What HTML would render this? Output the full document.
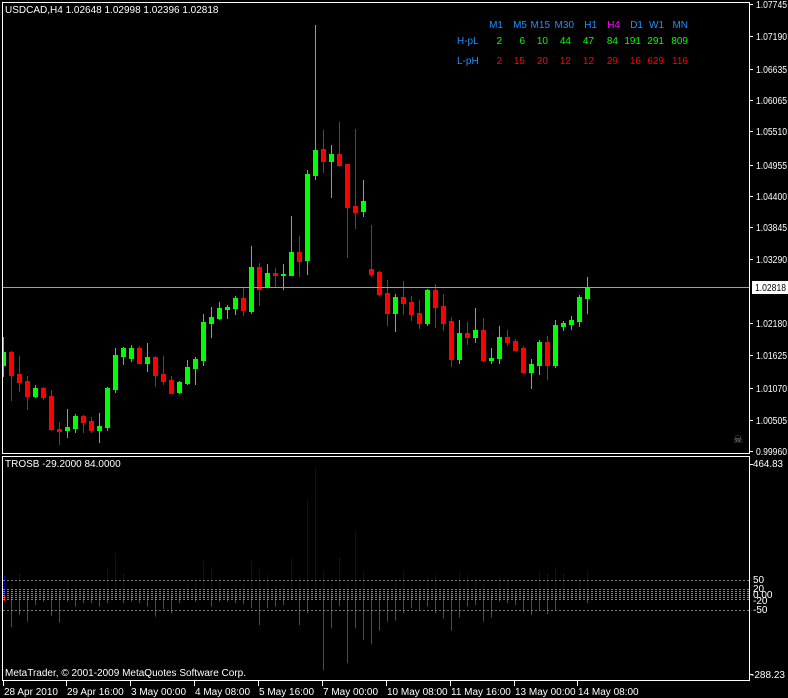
<!DOCTYPE html>
<html><head><meta charset="utf-8"><style>
html,body{margin:0;padding:0;background:#000;width:788px;height:698px;overflow:hidden}
svg{display:block}
text{font-family:"Liberation Sans",Tahoma,sans-serif;font-size:10px}
</style></head><body>
<svg id="s" width="788" height="698" xmlns="http://www.w3.org/2000/svg">
<rect width="788" height="698" fill="#000"/>
<g id="cand"></g>
<g id="ind"></g>
<rect x="2.5" y="2.5" width="747" height="451" fill="none" stroke="#fff" stroke-width="1"/>
<rect x="2.5" y="456.5" width="747" height="224" fill="none" stroke="#fff" stroke-width="1"/>
<line x1="3" y1="287.5" x2="749" y2="287.5" stroke="#a0a0a0"/>
<g id="ticks" stroke="#fff"></g>
<g fill="#fff">
<text x="5" y="13">USDCAD,H4  1.02648 1.02998 1.02396 1.02818</text>
<text x="5" y="467">TROSB -29.2000 84.0000</text>
<text x="5" y="676">MetaTrader, © 2001-2009 MetaQuotes Software Corp.</text>
</g>
<g fill="#1e90ff" text-anchor="end">
<text x="503" y="28">M1</text><text x="527" y="28">M5</text><text x="550" y="28">M15</text><text x="574" y="28">M30</text><text x="597" y="28">H1</text><text x="620" y="28" fill="#ff00ff">H4</text><text x="643" y="28">D1</text><text x="664" y="28">W1</text><text x="688" y="28">MN</text>
</g>
<text x="457" y="44" fill="#1e90ff">H-pL</text>
<text x="457" y="64" fill="#1e90ff">L-pH</text>
<g fill="#00ff00" text-anchor="end">
<text x="502" y="44">2</text><text x="525" y="44">6</text><text x="548" y="44">10</text><text x="571" y="44">44</text><text x="594" y="44">47</text><text x="618" y="44">84</text><text x="641" y="44">191</text><text x="664" y="44">291</text><text x="688" y="44">809</text>
</g>
<g fill="#ff0000" text-anchor="end">
<text x="502" y="64">2</text><text x="525" y="64">15</text><text x="548" y="64">20</text><text x="571" y="64">12</text><text x="594" y="64">12</text><text x="618" y="64">29</text><text x="641" y="64">16</text><text x="664" y="64">629</text><text x="688" y="64">116</text>
</g>
<g id="plab" fill="#fff"></g>
<rect x="752" y="281" width="36" height="13" fill="#fff"/>
<text x="755" y="291" fill="#000" textLength="31" lengthAdjust="spacingAndGlyphs">1.02818</text>
<text x="733" y="443" fill="#888" style="font-size:11px">☠</text>
<g fill="#fff">
<text x="753" y="467" textLength="30" lengthAdjust="spacingAndGlyphs">464.83</text>
<text x="753" y="583">50</text>
<text x="753" y="592">20</text>
<text x="753" y="598">0.00</text>
<text x="753" y="604">-20</text>
<text x="753" y="613">-50</text>
<text x="751" y="678" textLength="34" lengthAdjust="spacingAndGlyphs">-288.23</text>
</g>
<g id="tl" fill="#fff"></g>
</svg>
<script>
var NS="http://www.w3.org/2000/svg";
function el(p,t,a){var e=document.createElementNS(NS,t);for(var k in a)e.setAttribute(k,a[k]);p.appendChild(e);return e;}
var C=[
['g',352,365,337,376],['r',352,375,351,400],['r',374,382,356,391],['r',381,396,376,409],['g',388,396,385,397],['r',388,397,387,399],['r',396,429,390,430],['r',429,431,422,444],['g',427,430,409,437],['g',416,428,414,432],
['r',416,422,415,432],['r',421,430,417,432],['g',426,430,413,442],['g',388,427,387,430],['g',355,389,348,392],['g',348,356,347,364],['g',348,358,345,361],['r',348,363,346,363],['g',357,363,343,371],['r',357,375,356,386],
['r',374,381,356,384],['r',380,393,376,393],['g',382,392,381,393],['g',367,383,360,384],['g',359,368,357,384],['g',322,360,314,365],['g',317,323,307,337],['g',308,318,302,319],['g',307,309,305,318],['g',298,308,296,314],
['r',298,310,287,315],['g',267,311,246,313],['r',267,289,263,305],['g',273,287,264,287],['r',273,275,268,287],['g',274,275,264,289],['g',252,275,216,275],['r',252,261,236,276],['g',174,260,170,274],['g',150,175,25,179],
['r',149,161,130,172],['g',154,161,145,197],['r',154,165,122,166],['r',164,207,164,257],['r',206,212,129,228],['g',201,211,180,216],['r',269,274,225,276],['r',272,294,271,295],['r',293,313,280,325],['g',297,313,294,331],
['r',297,303,281,314],['r',302,314,296,320],['r',313,323,300,328],['g',290,323,289,325],['r',290,307,284,327],['r',306,323,294,330],['r',321,359,317,366],['g',333,359,320,363],['r',333,337,322,344],['g',330,337,308,342],
['r',330,360,318,361],['g',358,360,348,363],['g',337,358,326,363],['r',337,342,330,345],['r',341,350,339,350],['r',348,372,346,372],['g',364,372,359,388],['g',342,365,340,374],['r',342,365,336,379],['g',325,365,320,367],
['g',323,326,321,330],['g',320,324,316,329],['g',297,321,295,326],['g',287,298,277,313]];
var g=document.getElementById('cand');
var cp=el(document.getElementById('s'),'clipPath',{id:'cl'});el(cp,'rect',{x:3,y:3,width:746,height:450});
g.setAttribute('clip-path','url(#cl)');
C.forEach(function(c,k){var col=c[0]=='g'?'#00ff00':'#ff0000';
 el(g,'rect',{x:8*k+3,y:c[3],width:1,height:c[4]-c[3]+1,fill:col});
 el(g,'rect',{x:8*k+1,y:c[1],width:5,height:Math.max(1,c[2]-c[1]+1),fill:col});});
var B=[105,130,100,165,130,150,155,160,118,135,155,155,145,85,40,100,145,150,165,165,165,160,155,130,125,62,80,115,155,135,128,62,88,105,138,135,55,110,-120,-216,92,128,52,130,-30,95,140,160,155,125,93,140,135,110,105,150,155,98,105,115,130,165,110,118,155,165,148,95,100,80,100,150,118,92];
var R=[185,262,225,245,195,185,228,248,185,200,190,190,200,190,175,190,185,190,200,230,207,220,190,175,185,175,200,185,185,190,192,205,255,205,200,195,180,255,220,175,390,265,198,370,265,300,312,272,245,242,220,205,210,200,220,235,272,232,200,195,245,232,185,190,195,215,225,210,222,210,180,175,180,190];
var ig=document.getElementById('ind');
for(var k=0;k<74;k++){var x=8*k+3;if(x<4)x=4;
 var t=540+B[k]/3; el(ig,'rect',{x:x,y:t,width:1,height:595-t,fill:'#0000a8'});
 var b=540+R[k]/3; el(ig,'rect',{x:x,y:595,width:1,height:b-595,fill:'#ff0000'});}
[580,589,591,593,595,597,599,610].forEach(function(y){el(ig,'line',{x1:3,y1:y+.5,x2:749,y2:y+.5,stroke:'#808080','stroke-dasharray':'2,2'});});
var P=[['1.07745',4],['1.07190',36],['1.06635',69],['1.06065',100],['1.05510',131],['1.04955',165],['1.04400',196],['1.03845',227],['1.03290',259],['1.02180',323],['1.01625',355],['1.01070',388],['1.00505',420],['0.99960',451]];
var pl=document.getElementById('plab'),tk=document.getElementById('ticks');
P.forEach(function(p){var t=el(pl,'text',{x:756,y:p[1]+4,textLength:31,lengthAdjust:'spacingAndGlyphs'});t.textContent=p[0];el(tk,'line',{x1:749,y1:p[1]+.5,x2:753,y2:p[1]+.5});});
el(tk,'line',{x1:749,y1:464.5,x2:753,y2:464.5});el(tk,'line',{x1:749,y1:674.5,x2:753,y2:674.5});
var T=[['28 Apr 2010',3],['29 Apr 16:00',66],['3 May 00:00',130],['4 May 08:00',194],['5 May 16:00',258],['7 May 00:00',322],['10 May 08:00',386],['11 May 16:00',450],['13 May 00:00',514],['14 May 08:00',577]];
var tl=document.getElementById('tl');
T.forEach(function(p){var t=el(tl,'text',{x:p[1]+1,y:695});t.textContent=p[0];el(tk,'line',{x1:p[1]+.5,y1:681,x2:p[1]+.5,y2:686});});
</script>
</body></html>
